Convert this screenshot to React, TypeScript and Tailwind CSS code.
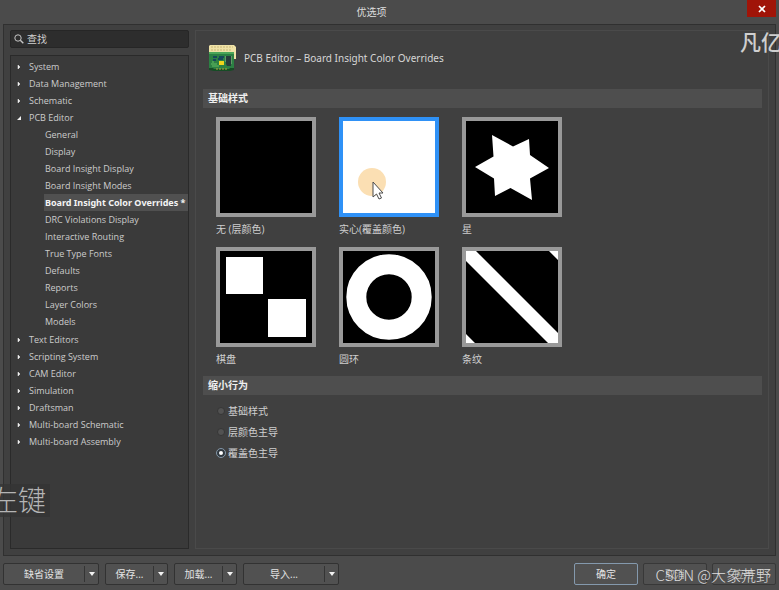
import { useState } from 'react'
import type { ReactNode } from 'react'
import clsx from 'clsx'

type TreeNode = { label: string; children?: string[] }

const TREE: TreeNode[] = [
  { label: 'System' },
  { label: 'Data Management' },
  { label: 'Schematic' },
  {
    label: 'PCB Editor',
    children: [
      'General',
      'Display',
      'Board Insight Display',
      'Board Insight Modes',
      'Board Insight Color Overrides',
      'DRC Violations Display',
      'Interactive Routing',
      'True Type Fonts',
      'Defaults',
      'Reports',
      'Layer Colors',
      'Models',
    ],
  },
  { label: 'Text Editors' },
  { label: 'Scripting System' },
  { label: 'CAM Editor' },
  { label: 'Simulation' },
  { label: 'Draftsman' },
  { label: 'Multi-board Schematic' },
  { label: 'Multi-board Assembly' },
]

const PATTERNS: { id: string; label: string; art: ReactNode }[] = [
  { id: 'none', label: '无 (层颜色)', art: null },
  { id: 'solid', label: '实心(覆盖颜色)', art: <rect width="92" height="92" fill="#fff" /> },
  {
    id: 'star',
    label: '星',
    art: (
      <path
        d="M26 14 47 25.500 63 18 64 34 83 47 64 57.500 66 79 44.500 67 29 75 28 57.500 9 46 27.500 35.500Z"
        fill="#fff"
      />
    ),
  },
  {
    id: 'checker',
    label: '棋盘',
    art: (
      <>
        <rect x="6" y="6" width="37" height="37" fill="#fff" />
        <rect x="48" y="48" width="38" height="38" fill="#fff" />
      </>
    ),
  },
  {
    id: 'ring',
    label: '圆环',
    art: <circle cx="46" cy="46" r="32.700" fill="none" stroke="#fff" strokeWidth="20" />,
  },
  {
    id: 'stripe',
    label: '条纹',
    art: <path d="M0 0H10L92 82V92H82L0 10ZM83 0H92V9ZM0 83V92H9Z" fill="#fff" />,
  },
]

const ZOOM_MODES = ['基础样式', '层颜色主导', '覆盖色主导']

function SearchIcon() {
  return (
    <svg viewBox="0 0 10 10" className="size-[10px] shrink-0" fill="none" stroke="#c4c4c4">
      <circle cx="4" cy="4" r="3.200" />
      <path d="M6.300 6.300 9.300 9.300" strokeWidth="1.400" />
    </svg>
  )
}

function BoardIcon() {
  return (
    <svg viewBox="0 0 28 28" className="size-7 shrink-0">
      <path d="M2 1H26L28 3V15H24V9H1V2Z" fill="#efe2a6" />
      <path d="M3 3H25M3 6H24" stroke="#c9b878" strokeDasharray="2 1" />
      <path d="M1 8H26V26H22L21 27H6L5 26H1Z" fill="#2c8043" />
      <path d="M1 8H26V10H1Z" fill="#4ba659" />
      <path d="M1 24H5L6 25H21L22 24H26V26L22 27H6L1 26Z" fill="#164c25" />
      <path d="M5 13H9M11 13H16M5 16H8M10 15H15" stroke="#17485a" strokeWidth="2" />
      <path d="M3 20H9M4 22H11M4 18H6" stroke="#62bd64" />
      <path d="M18 12H23V22H19L18 20Z" fill="#283b3b" />
      <path d="M17 13H18M17 15H18M17 17H18M23 13H24M23 15H24M23 17H24M23 19H24" stroke="#91b78b" />
      <rect x="11" y="17" width="5" height="4" fill="#efd51d" />
      <path d="M8 25H20" stroke="#b3a93b" strokeDasharray="2 1" />
    </svg>
  )
}

function TreeArrow({ open }: { open: boolean }) {
  return (
    <svg viewBox="0 0 6 6" className="size-[6px] shrink-0" fill="#f0f0f0">
      {open ? <path d="M5 1V5H1Z" /> : <path d="M2 1 4 3 2 5Z" stroke="#f0f0f0" strokeWidth="0.500" />}
    </svg>
  )
}

function SectionTitle({ children }: { children: ReactNode }) {
  return (
    <h2 className="flex h-[19px] items-center bg-[#4e4e4e] px-[5px] text-[10px] font-bold text-[#f0f0f0]">
      {children}
    </h2>
  )
}

function SplitButton({ label, wide }: { label: string; wide?: boolean }) {
  return (
    <div
      className={clsx(
        'flex h-[22px] rounded-[2px] border border-[#323232] bg-[#515151] text-[10px] text-[#e4e4e4]',
        wide ? 'w-24' : 'w-[63px]',
      )}
    >
      <button type="button" className="flex-1">
        {label}
      </button>
      <button
        type="button"
        aria-label={`${label} 选项`}
        className="my-[2px] flex w-[14px] items-center justify-center border-l border-[#343434]"
      >
        <svg viewBox="0 0 6 4" className="h-1 w-[6px]" fill="#f2f2f2">
          <path d="M0 0H6L3 4Z" />
        </svg>
      </button>
    </div>
  )
}

function DialogButton({ label, primary }: { label: string; primary?: boolean }) {
  return (
    <button
      type="button"
      className={clsx(
        'h-[22px] w-16 rounded-[2px] border bg-[#515151] text-[10px]',
        primary ? 'border-[#8499ad] text-[#e4e4e4]' : 'border-[#383838] text-[#b4b4b4]',
      )}
    >
      {label}
    </button>
  )
}

function Sidebar({ page, onSelect }: { page: string; onSelect: (page: string) => void }) {
  return (
    <aside className="flex w-[179px] shrink-0 flex-col gap-[7px]">
      <label className="flex h-[18px] items-center gap-[3px] rounded-[2px] border border-[#262626] bg-[#2d2d2d] px-[3px]">
        <SearchIcon />
        <input
          type="text"
          placeholder="查找"
          aria-label="查找"
          className="min-w-0 flex-1 bg-transparent text-[10px] outline-none placeholder:text-[#d0d0d0]"
        />
      </label>
      <nav className="flex-1 border border-[#2a2a2a] bg-[#3a3a3a] text-[9px] text-[#cccccc]">
        <ul className="pt-[2px]">
          {TREE.map((node) => (
            <li key={node.label}>
              <button type="button" className="flex h-[17px] w-full items-center gap-[7px] pl-[5px] text-left">
                <TreeArrow open={!!node.children} />
                {node.label}
              </button>
              {node.children && (
                <ul className="pb-px pl-[33px]">
                  {node.children.map((child) => (
                    <li key={child}>
                      <button
                        type="button"
                        onClick={() => onSelect(child)}
                        className={clsx(
                          'block h-[17px] w-full overflow-hidden pl-[1px] text-left whitespace-nowrap',
                          child === page && "bg-[#505050] font-['Noto_Sans',sans-serif] font-bold text-[#f4f4f4]",
                        )}
                      >
                        {child === page ? `${child} *` : child}
                      </button>
                    </li>
                  ))}
                </ul>
              )}
            </li>
          ))}
        </ul>
      </nav>
    </aside>
  )
}

function PointerMark() {
  return (
    <svg viewBox="0 0 28 32" className="pointer-events-none absolute top-[47px] left-[15px] h-8 w-7">
      <circle cx="14" cy="14" r="14" fill="#fbdfb3" />
      <path
        d="M15 14V29L18.500 26 21 31 23.500 30 21 25H25Z"
        fill="#fff"
        stroke="#4a4a4a"
        strokeLinejoin="round"
      />
    </svg>
  )
}

export default function App() {
  const [page, setPage] = useState('Board Insight Color Overrides')
  const [pattern, setPattern] = useState('solid')
  const [mode, setMode] = useState('覆盖色主导')

  return (
    <div className="relative flex min-h-screen flex-col overflow-hidden bg-[#4b4b4b] font-['Open_Sans','Noto_Sans_CJK_SC',sans-serif] text-[#cfcfcf]">
      <header className="flex h-6 items-start">
        <h1 className="flex-1 pt-1 pr-1 text-center text-[10px] leading-4 text-[#dedede]">优选项</h1>
        <button
          type="button"
          aria-label="关闭"
          className="mr-[3px] flex h-[17px] w-[29px] items-center justify-center bg-[#a01408]"
        >
          <svg viewBox="0 0 8 8" className="size-2" stroke="#fff" strokeWidth="1.700">
            <path d="M1 1 7 7M7 1 1 7" />
          </svg>
        </button>
      </header>

      <main className="mx-[3px] flex flex-1 gap-[6px] border border-[#303030] bg-[#404040] px-[6px] pt-[5px] pb-[6px]">
        <Sidebar page={page} onSelect={setPage} />

        <section className="flex min-w-0 flex-1 flex-col border border-[#4a4a4a] pr-[6px] pl-[7px]">
          <div className="flex h-[58px] items-center gap-2 pb-[4px] pl-[5px]">
            <BoardIcon />
            <p className="font-['Noto_Sans',sans-serif] text-[10px] text-[#d6d6d6]">PCB Editor – {page}</p>
          </div>

          <SectionTitle>基础样式</SectionTitle>
          <div className="flex">
            <div className="grid grid-cols-3 gap-x-[23px] gap-y-[6px] pt-[9px] pl-[13px]">
              {PATTERNS.map((item) => (
                <button
                  key={item.id}
                  type="button"
                  aria-pressed={item.id === pattern}
                  onClick={() => setPattern(item.id)}
                  className="flex flex-col text-left"
                >
                  <span
                    className={clsx(
                      'relative block size-[100px] border-4 bg-black',
                      item.id === pattern ? 'border-[#2f91f6]' : 'border-[#999999]',
                    )}
                  >
                    <svg viewBox="0 0 92 92" className="block size-full">
                      {item.art}
                    </svg>
                    {item.id === 'solid' && <PointerMark />}
                  </span>
                  <span className="block h-6 text-[10px] leading-6">{item.label}</span>
                </button>
              ))}
            </div>
          </div>

          <div className="pt-[5px]">
            <SectionTitle>缩小行为</SectionTitle>
          </div>
          <fieldset className="flex flex-col gap-px pt-[6px] pl-[14px]">
            {ZOOM_MODES.map((item) => (
              <label key={item} className="flex h-5 items-center gap-[3px] text-[10px]">
                <input
                  type="radio"
                  name="zoom-mode"
                  checked={item === mode}
                  onChange={() => setMode(item)}
                  className="size-[8px] appearance-none rounded-full border border-[#363636] bg-[#525252] checked:border-2 checked:border-[#30383f] checked:bg-white checked:outline checked:outline-[#8296a8]"
                />
                {item}
              </label>
            ))}
          </fieldset>
        </section>
      </main>

      <footer className="flex items-center gap-[6px] px-[3px] pt-[7px] pb-[5px]">
        <SplitButton label="缺省设置" wide />
        <SplitButton label="保存..." />
        <SplitButton label="加载..." />
        <SplitButton label="导入..." wide />
        <div className="ml-auto flex gap-[5px]">
          <DialogButton label="确定" primary />
          <DialogButton label="取消" />
          <DialogButton label="应用" />
        </div>
      </footer>

      {/* Recording overlays */}
      <div className="pointer-events-none absolute top-[26px] left-[740px] text-[21px] leading-8 font-medium whitespace-nowrap text-[#cfcfcf]">
        凡亿
      </div>
      <div className="pointer-events-none absolute bottom-[73px] left-[-10px] bg-[#343434]/80 pr-1 text-[28px] leading-[33px] font-light text-[#b4b4b4]">
        左键
      </div>
      <div className="pointer-events-none absolute right-2 bottom-[5px] font-['Noto_Sans_CJK_SC',sans-serif] text-[15px] leading-5 font-light whitespace-nowrap text-[#dddddd]">
        CSDN @大象荒野
      </div>
    </div>
  )
}
